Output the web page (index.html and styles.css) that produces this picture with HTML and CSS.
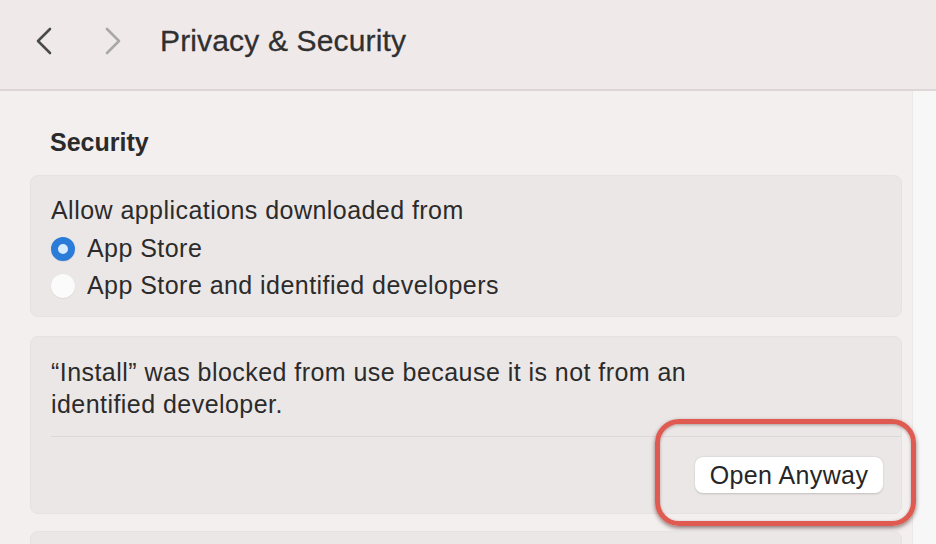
FILE: index.html
```html
<!DOCTYPE html>
<html>
<head>
<meta charset="utf-8">
<link rel="stylesheet" href="styles.css">
</head>
<body>
<div class="window">
  <header class="toolbar">
    <svg class="chev back" width="20" height="30" viewBox="0 0 20 30"><path d="M16 3 L4 15 L16 27" fill="none" stroke="#4a4a4a" stroke-width="2.6" stroke-linecap="round" stroke-linejoin="round"/></svg>
    <svg class="chev fwd" width="20" height="30" viewBox="0 0 20 30"><path d="M4 3 L16 15 L4 27" fill="none" stroke="#a9a7a7" stroke-width="2.6" stroke-linecap="round" stroke-linejoin="round"/></svg>
    <h1 class="title">Privacy &amp; Security</h1>
  </header>
  <div class="body">
    <main class="content">
      <h2 class="section">Security</h2>
      <div class="card card-allow">
        <p class="line">Allow applications downloaded from</p>
        <div class="radio-row first"><span class="radio on"></span><span>App Store</span></div>
        <div class="radio-row"><span class="radio"></span><span>App Store and identified developers</span></div>
      </div>
      <div class="card card-block">
        <p class="msg">“Install” was blocked from use because it is not from an<br>identified developer.</p>
        <div class="sep"></div>
        <div class="actions">
          <button class="btn">Open Anyway</button>
        </div>
        <div class="highlight"></div>
      </div>
      <div class="card card-next"></div>
    </main>
    <aside class="scroll"></aside>
  </div>
</div>
</body>
</html>
```
FILE: styles.css
```css
html, body {
  margin: 0;
  padding: 0;
}
body {
  width: 936px;
  height: 544px;
  overflow: hidden;
  font-family: "Liberation Sans", Arial, sans-serif;
  color: #2b2b2b;
  background: #f2efee;
}
.window {
  display: flex;
  flex-direction: column;
  height: 544px;
}
.toolbar {
  flex: none;
  background: #efe9e9;
  border-bottom: 2px solid #dcd7d6;
  display: flex;
  align-items: center;
  padding-left: 34px;
  box-sizing: border-box;
  height: 91px;
}
.chev { display: block; }
.chev.back { margin-top: -8px; }
.chev.fwd { margin-left: 49px; margin-top: -8px; }
.title {
  margin: -8px 0 0 37px;
  font-size: 30px;
  letter-spacing: 0.15px;
  font-weight: normal;
  color: #303030;
  -webkit-text-stroke: 0.3px #303030;
}
.body {
  flex: 1;
  display: flex;
}
.content {
  width: 912px;
  box-sizing: border-box;
  padding: 0 10px 0 30px;
  background: #f2efee;
}
.scroll {
  flex: 1;
  background: #f8f7f7;
  border-left: 1px solid #ebe8e7;
}
.section {
  margin: 37px 0 0 20px;
  font-size: 25px;
  font-weight: bold;
  color: #2a2a2a;
  height: 47px;
  line-height: 28px;
}
.card {
  background: #ebe7e6;
  border-radius: 8px;
  border: 1px solid #e6e2e1;
  box-sizing: border-box;
  padding: 0 0 0 20px;
  position: relative;
  font-size: 25px;
  letter-spacing: 0.45px;
}
.card-allow {
  height: 142px;
  padding-top: 19px;
}
.line { margin: 0; line-height: 30px; }
.radio-row {
  display: flex;
  align-items: center;
  height: 37px;
  gap: 12px;
}
.radio-row.first { margin-top: 5px; }
.radio {
  width: 24px;
  height: 24px;
  border-radius: 50%;
  background: #fbfbfb;
  box-sizing: border-box;
  box-shadow: 0 0.5px 1px rgba(0,0,0,0.12);
  flex: none;
}
.radio.on {
  background: #d9ecff;
  border: 7px solid #2b7cd9;
}
.card-block {
  margin-top: 19px;
  height: 178px;
  padding-top: 19px;
}
.msg {
  margin: 0;
  line-height: 32px;
}
.sep {
  height: 1px;
  background: #dcd8d7;
  margin-top: 16px;
}
.actions {
  display: flex;
  justify-content: flex-end;
  padding: 20px 18px 0 0;
}
.btn {
  font-family: inherit;
  font-size: 25px;
  letter-spacing: 0.4px;
  color: #262626;
  background: #ffffff;
  border: none;
  border-radius: 8px;
  width: 188px;
  height: 36px;
  padding: 0;
  box-shadow: 0 0.5px 2px rgba(0,0,0,0.18);
}
.highlight {
  position: absolute;
  left: 624px;
  top: 82px;
  width: 261px;
  height: 107px;
  box-sizing: border-box;
  border: 5px solid #df5a50;
  border-radius: 24px;
  box-shadow: 0 2px 4px rgba(60,20,20,0.55), inset 0 1px 3px rgba(60,20,20,0.35);
}
.card-next {
  margin-top: 17px;
  height: 40px;
}
```
